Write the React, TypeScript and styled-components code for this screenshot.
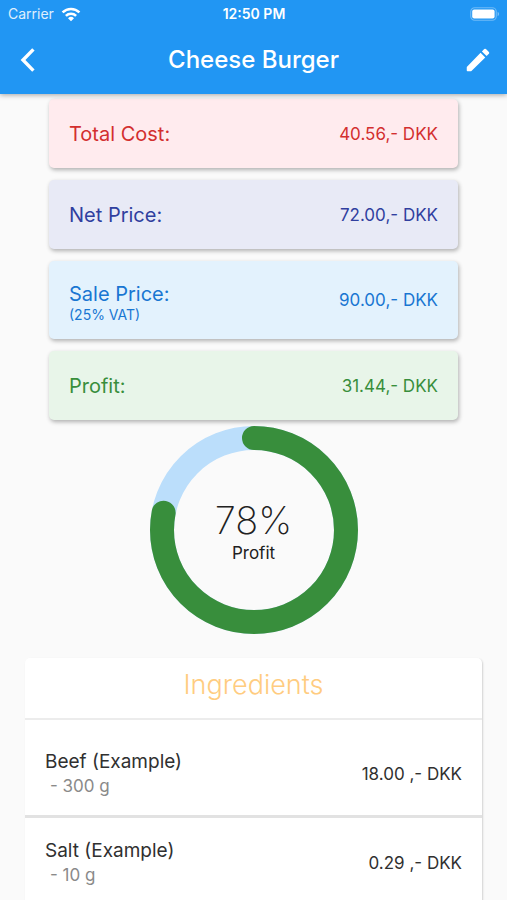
import React from "react";
import styled, { createGlobalStyle } from "styled-components";

const GlobalStyle = createGlobalStyle`
  *, *::before, *::after { box-sizing: border-box; }
  body {
    margin: 0;
    background: #fafafa;
    color: #212121;
    font-family: Inter, Roboto, sans-serif;
  }
`;

const Screen = styled.div`
  display: flex;
  flex-direction: column;
  height: 100vh;
`;

const Header = styled.header`
  position: relative;
  z-index: 1;
  flex: none;
  background: #2196f3;
  color: #ffffff;
  box-shadow: 0 1px 5px rgba(0, 0, 0, 0.35);
`;

const StatusBar = styled.div`
  display: grid;
  grid-template-columns: 1fr auto 1fr;
  align-items: center;
  height: 28px;
  padding: 0 7px 0 8px;
  font-size: 14px;
  line-height: 16px;
`;

const Carrier = styled.span`
  display: flex;
  align-items: center;
  gap: 7px;
`;

const CarrierName = styled.span`
  opacity: 0.85;
`;

const Clock = styled.span`
  font-weight: 600;
`;

const Battery = styled.svg`
  justify-self: end;
`;

const Toolbar = styled.div`
  display: grid;
  grid-template-columns: 44px 1fr 44px;
  align-items: center;
  height: 66px;
  padding: 0 7px;
`;

const Title = styled.h1`
  margin: 0;
  padding-bottom: 2px;
  text-align: center;
  font-size: 24px;
  line-height: 32px;
  font-weight: 500;
`;

const IconButton = styled.button`
  display: grid;
  place-items: center;
  width: 44px;
  height: 44px;
  padding: 0 0 2px;
  border: 0;
  background: none;
  color: inherit;
  cursor: pointer;
`;

const Content = styled.main`
  flex: 1;
  min-height: 0;
  overflow-y: auto;
  scrollbar-width: none;
  padding: 5px 25px 0;
`;

const Summary = styled.section`
  display: flex;
  flex-direction: column;
  gap: 12px;
  padding: 0 24px;
`;

const PriceCard = styled.div<{ $bg: string; $color: string }>`
  display: flex;
  align-items: center;
  justify-content: space-between;
  min-height: 69px;
  padding: 15px 20px;
  border-radius: 5px;
  background: ${(p) => p.$bg};
  color: ${(p) => p.$color};
  box-shadow: 1px 2px 4px rgba(0, 0, 0, 0.3);
`;

const PriceText = styled.div<{ $withNote: boolean }>`
  padding-top: ${(p) => (p.$withNote ? 6 : 0)}px;
`;

const PriceLabel = styled.div`
  font-size: 20px;
  line-height: 24px;
`;

const PriceNote = styled.div`
  font-size: 14px;
  line-height: 18px;
`;

const PriceValue = styled.div`
  font-size: 17px;
  line-height: 24px;
`;

const Gauge = styled.section`
  display: grid;
  place-items: center;
  margin: 6px 0 24px;

  > * {
    grid-area: 1 / 1;
  }
`;

const GaugeText = styled.div`
  text-align: center;
`;

const GaugeValue = styled.div`
  font-size: 38px;
  line-height: 46px;
  font-weight: 200;
`;

const GaugeLabel = styled.div`
  font-size: 17px;
  line-height: 20px;
`;

const Ingredients = styled.section`
  border-radius: 5px 5px 0 0;
  background: #ffffff;
  box-shadow: 1px 1px 2px rgba(0, 0, 0, 0.16);
`;

const IngredientsTitle = styled.h2`
  margin: 0;
  padding: 9px 0 15px;
  border-bottom: 2px solid #ececec;
  text-align: center;
  color: #ffcc80;
  font-size: 27px;
  line-height: 36px;
  font-weight: 300;
`;

const IngredientList = styled.ul`
  margin: 0;
  padding: 9px 0 0;
  list-style: none;
`;

const IngredientRow = styled.li`
  display: flex;
  align-items: center;
  justify-content: space-between;
  padding: 20px 20px 16px;
  border-bottom: 3px solid #e2e2e2;
`;

const IngredientName = styled.div`
  font-size: 19px;
  line-height: 25px;
  color: #303030;
`;

const IngredientAmount = styled.div`
  padding-left: 5px;
  font-size: 17px;
  line-height: 25px;
  color: #8a8a8a;
`;

const IngredientPrice = styled.div`
  font-size: 17px;
  line-height: 24px;
  color: #303030;
`;

const prices = [
  { label: "Total Cost:", value: "40.56,- DKK", bg: "#ffebee", color: "#d32f2f" },
  { label: "Net Price:", value: "72.00,- DKK", bg: "#e8eaf6", color: "#303f9f" },
  { label: "Sale Price:", note: "(25% VAT)", value: "90.00,- DKK", bg: "#e3f2fd", color: "#1976d2" },
  { label: "Profit:", value: "31.44,- DKK", bg: "#e8f5e9", color: "#388e3c" },
];

const ingredients = [
  { name: "Beef (Example)", amount: "- 300 g", price: "18.00 ,- DKK" },
  { name: "Salt (Example)", amount: "- 10 g", price: "0.29 ,- DKK" },
];

function WifiIcon() {
  return (
    <svg width="20" height="15" viewBox="0 0 20 15" fill="none" stroke="currentColor" strokeWidth="2.6" aria-hidden="true">
      <path d="M1.6 5.4a12 12 0 0 1 16.8 0" />
      <path d="M4.9 8.9a7.3 7.3 0 0 1 10.2 0" />
      <path d="M10 14.2 7 11.2a4.3 4.3 0 0 1 6 0z" fill="currentColor" stroke="none" />
    </svg>
  );
}

function BatteryIcon() {
  return (
    <Battery width="30" height="14" viewBox="0 0 30 14" aria-hidden="true">
      <rect x="0.75" y="0.75" width="25.5" height="12.5" rx="4" fill="none" stroke="#fff" strokeOpacity="0.35" strokeWidth="1.2" />
      <rect x="2.2" y="2.5" width="22.4" height="9" rx="2" fill="#fff" />
      <path d="M27.6 4.8c2 .8 2 3.6 0 4.4z" fill="#fff" fillOpacity="0.4" />
    </Battery>
  );
}

function BackIcon() {
  return (
    <svg width="18" height="24" viewBox="0 0 18 24" fill="none" stroke="currentColor" strokeWidth="3.4" aria-hidden="true">
      <path d="M13.4 1.4 3 12l10.4 10.6" />
    </svg>
  );
}

function EditIcon() {
  return (
    <svg width="30" height="30" viewBox="0 0 24 24" fill="currentColor" aria-hidden="true">
      <path d="M3.6 17.05a1 1 0 0 0-.6.9V20.2c0 .45.35.8.8.8h2.25a1 1 0 0 0 .7-.3L17.81 9.94l-3.75-3.75L3.6 17.05zM20.71 7.04a1 1 0 0 0 0-1.41l-2.34-2.34a1 1 0 0 0-1.41 0l-1.83 1.83 3.75 3.75 1.83-1.83z" />
    </svg>
  );
}

function ProfitRing({ percent }: { percent: number }) {
  return (
    <svg width="208" height="208" viewBox="0 0 208 208" fill="none" strokeWidth="24" aria-hidden="true">
      <circle cx="104" cy="104" r="92" stroke="#bbdefb" />
      <circle
        cx="104"
        cy="104"
        r="92"
        stroke="#388e3c"
        strokeLinecap="round"
        pathLength={100}
        strokeDasharray={`${percent} 100`}
        transform="rotate(-90 104 104)"
      />
    </svg>
  );
}

export default function App() {
  return (
    <>
      <GlobalStyle />
      <Screen>
        <Header>
          <StatusBar>
            <Carrier>
              <CarrierName>Carrier</CarrierName>
              <WifiIcon />
            </Carrier>
            <Clock>12:50 PM</Clock>
            <BatteryIcon />
          </StatusBar>
          <Toolbar>
            <IconButton type="button" aria-label="Back">
              <BackIcon />
            </IconButton>
            <Title>Cheese Burger</Title>
            <IconButton type="button" aria-label="Edit">
              <EditIcon />
            </IconButton>
          </Toolbar>
        </Header>
        <Content>
          <Summary>
            {prices.map((p) => (
              <PriceCard key={p.label} $bg={p.bg} $color={p.color}>
                <PriceText $withNote={Boolean(p.note)}>
                  <PriceLabel>{p.label}</PriceLabel>
                  {p.note && <PriceNote>{p.note}</PriceNote>}
                </PriceText>
                <PriceValue>{p.value}</PriceValue>
              </PriceCard>
            ))}
          </Summary>
          <Gauge>
            <ProfitRing percent={78} />
            <GaugeText>
              <GaugeValue>78%</GaugeValue>
              <GaugeLabel>Profit</GaugeLabel>
            </GaugeText>
          </Gauge>
          <Ingredients>
            <IngredientsTitle>Ingredients</IngredientsTitle>
            <IngredientList>
              {ingredients.map((i) => (
                <IngredientRow key={i.name}>
                  <div>
                    <IngredientName>{i.name}</IngredientName>
                    <IngredientAmount>{i.amount}</IngredientAmount>
                  </div>
                  <IngredientPrice>{i.price}</IngredientPrice>
                </IngredientRow>
              ))}
            </IngredientList>
          </Ingredients>
        </Content>
      </Screen>
    </>
  );
}
